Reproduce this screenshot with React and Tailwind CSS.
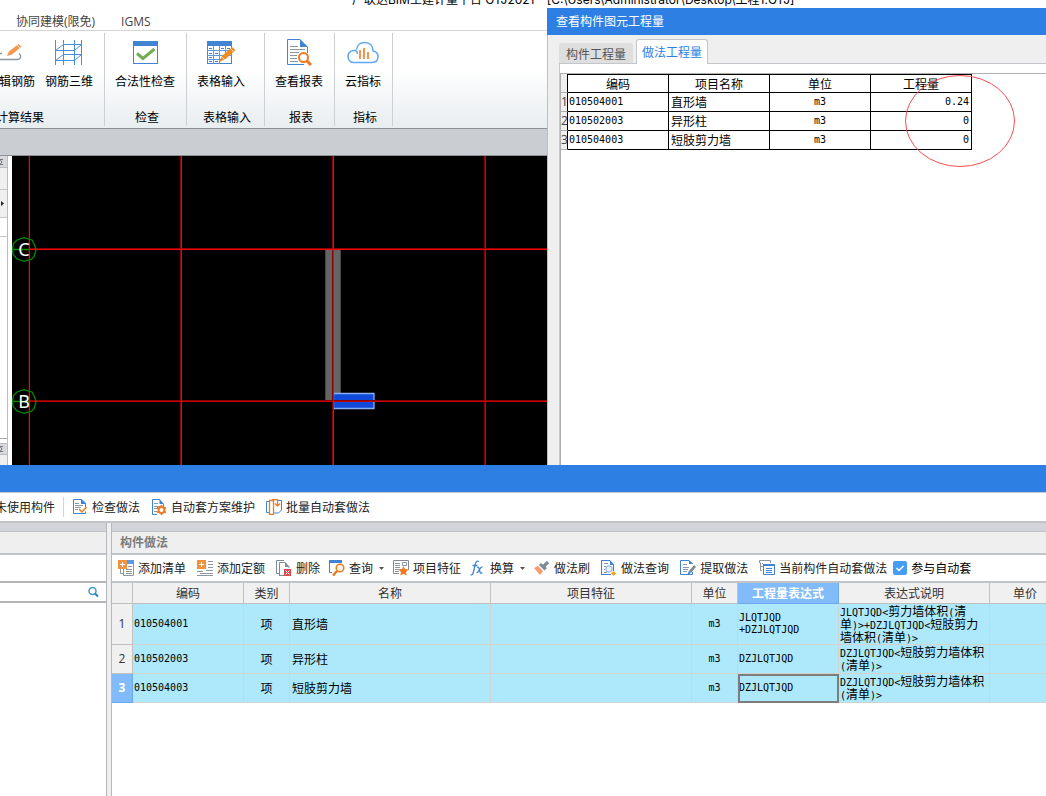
import { Fragment } from "react";

// Ribbon icons

function RebarEditIcon() {
  return (
    <svg width="28" height="28" viewBox="0 0 28 28" fill="none">
      <path d="M0 15.5h5M0 21.5h20.5a3.2 3.2 0 0 0 1.5-6" stroke="#8c979f" strokeWidth="1.3" />
      <path d="M10 18l2-4.500L21.5 6l3 2.5-9.5 8z" fill="#f5964d" />
      <path d="M20 7l3 3" stroke="#fff" strokeWidth="0.8" />
    </svg>
  );
}

function Rebar3dIcon() {
  return (
    <svg width="28" height="28" viewBox="0 0 28 28" fill="none" stroke="#4a8fdc">
      <path d="M.5 2v25M8.5 2v25M19.5 2v25M26.5 2v25" />
      <path d="M8 6.5h19M0 12.5h20M8 16.5h19M0 22.5h20" />
      <path d="M.5 12.5l8-6M19.5 12.5l7-6M.5 22.5l8-6M19.5 22.5l7-6" />
    </svg>
  );
}

function ValidateIcon() {
  return (
    <svg width="28" height="28" viewBox="0 0 28 28" fill="none">
      <rect x="2.5" y="3.5" width="24" height="22" fill="#fff" stroke="#4384d2" />
      <path d="M2 3h25v5H2z" fill="#4384d2" />
      <path d="M6 15.5l6 5L23.5 11" stroke="#74ad54" strokeWidth="3" />
    </svg>
  );
}

function TableInputIcon() {
  return (
    <svg width="28" height="28" viewBox="0 0 28 28" fill="none">
      <rect x=".5" y="3.5" width="24" height="22" fill="#fff" stroke="#4384d2" />
      <path d="M0 3h25v5H0z" fill="#4384d2" />
      <path d="M0 12.5h25M0 17.5h25M0 21.5h16M6.5 8v18M12.5 8v18M18.5 8v10" stroke="#5c9be2" />
      <path d="M2 10.5h3M2 15.5h3M2 19.5h3M2 23.5h3M8 15.5h3M8 23.5h3M14 10.5h3M20 10.5h3" stroke="#4384d2" />
      <path d="M12 24l3-6L25 9l3.5 3-10 9z" fill="#f08c1e" />
      <path d="M14.5 18.5l3 3M23.5 10.5l3 3" stroke="#fff" strokeWidth=".7" />
    </svg>
  );
}

function ReportIcon() {
  return (
    <svg width="28" height="28" viewBox="0 0 28 28" fill="none">
      <path d="M15 1.5H2.5v25H19M22.5 9v6" stroke="#4384d2" />
      <path d="M15 1v8h8z" fill="#4384d2" />
      <path d="M5 8.5h8M5 11.5h15M5 14.5h9M5 17.5h7M5 20.5h7M5 23.5h8" stroke="#8c979f" />
      <circle cx="18.5" cy="19.5" r="4.5" fill="#fff" stroke="#ee7b22" strokeWidth="2" />
      <path d="M22 23l4 4" stroke="#ee7b22" strokeWidth="3" />
    </svg>
  );
}

function CloudIcon() {
  return (
    <svg width="32" height="28" viewBox="0 0 32 28" fill="none">
      <path
        d="M10.5 16c0-2-1-4-4-3.5C3 13 1 15.5 1 18.5 1 22 3.5 24.5 7 24.5h18c4 0 6-2.5 6-6 0-3-1.5-5-5-5.5 0-5-3-8.5-8.5-8.5-4.5 0-7.5 3-8 7"
        stroke="#62a9f2"
        strokeWidth="1.6"
      />
      <path d="M12 12h2v9h-2zM16 10h2v11h-2zM20 14h2v7h-2z" fill="#f5964d" />
    </svg>
  );
}

// Toolbar icons, all on a 16px grid

function Icon({ children }) {
  return (
    <svg width="16" height="16" viewBox="0 0 16 16" fill="none" className="shrink-0">
      {children}
    </svg>
  );
}

function PageBase() {
  return (
    <>
      <path d="M6 15.5H1.5V.5H9M12.5 5v3" stroke="#3f84d4" />
      <path d="M8.5 0v5H13z" fill="#3f84d4" />
      <path d="M3 4.5h4M3 7.5h7M3 9.5h4M3 12.5h3" stroke="#8c979f" />
    </>
  );
}

const checkIcon = (
  <Icon>
    <path d="M13.5 8v-4L9.5.5h-8v14h12v-2" stroke="#3f84d4" />
    <path d="M9 0v5h5z" fill="#3f84d4" />
    <path d="M3 4.5h4M3 6.5h8M3 8.5h6M3 10.5h3" stroke="#8c979f" />
    <path d="M7 10l3 3 4.5-5" stroke="#ee7b22" strokeWidth="1.5" />
  </Icon>
);

const schemeIcon = (
  <Icon>
    <PageBase />
    <circle cx="10.5" cy="11" r="3" stroke="#ee7b22" strokeWidth="2" fill="#fff" />
    <path d="M10.5 6v2M10.5 14v2M6 8.5l2 1M13 12.5l2 1M6 13.5l2-1M13 9.5l2-1" stroke="#ee7b22" strokeWidth="1.8" />
  </Icon>
);

const batchIcon = (
  <Icon>
    <path d="M3 2.5H.5v11H3M11 1.5h4.5V11l-3 3H8" stroke="#3f84d4" />
    <path d="M3.5 1.5h4v14h-4zM6 .5h5.5V6M9 4.5L11.5 7 14 4.5" stroke="#ee7b22" strokeWidth="1.3" />
  </Icon>
);

const addListIcon = (
  <Icon>
    <path d="M9 0h7v4H9z" fill="#5b9ae2" />
    <path d="M2.5 9v4.5H5M5.5 9v6.5h10V4" stroke="#8c979f" />
    <path d="M10 6.5h4M8 9.5h6M8 11.5h6M8 13.5h6" stroke="#8c979f" />
    <path d="M0 0h9v9H0z" fill="#f0923f" />
    <path d="M4.5 2v5M2 4.5h5" stroke="#fff" />
  </Icon>
);

const addQuotaIcon = (
  <Icon>
    <path d="M11 1.5h5M11 4.5h5M11 7.5h5M9 10.5h7M0 11.5h6M3 13.5h13M0 15.5h16" stroke="#8c979f" />
    <path d="M0 0h9v9H0z" fill="#f0923f" />
    <path d="M4.5 2v5M2 4.5h5" stroke="#fff" />
  </Icon>
);

const deleteIcon = (
  <Icon>
    <path d="M3 13.5H.5V.5H8M3.5 15V2.5H9l4 4V8M8 15.5H3" stroke="#7f8b94" />
    <path d="M9 2v5h4z" fill="#7f8b94" />
    <path d="M8 9h7v7H8z" fill="#d9484b" />
    <path d="M9.5 10.5l4 4M13.5 10.5l-4 4" stroke="#fff" />
  </Icon>
);

const queryIcon = (
  <Icon>
    <path d="M.5 3v9.5H3" stroke="#3f84d4" />
    <path d="M0 0h13v3H0z" fill="#3f84d4" />
    <circle cx="11" cy="8" r="3.8" fill="#fff3e6" stroke="#ee7b22" strokeWidth="1.5" />
    <path d="M8 11l-4 4.5" stroke="#ee7b22" strokeWidth="2.5" />
  </Icon>
);

const featureIcon = (
  <Icon>
    <path d="M6 13.5H.5V.5h15V10" stroke="#7f8b94" />
    <path d="M2 3.5h5M2 5.5h5M2 7.5h5M2 9.5h6M2 11.5h4M9.5 2.5h4v3h-4z" stroke="#8c979f" />
    <path d="M10.5 6l1.5 3 3.5.5-2.5 2.5.8 3.5-3.3-1.7-3.2 1.7.7-3.5L5.5 9.5 9 9z" fill="#ee7b22" />
  </Icon>
);

const fxIcon = (
  <Icon>
    <path d="M9 1.5C7 .3 5.8 1.8 5.3 4L3.3 12.5C2.9 14.5 2 15.2.6 14.6M2.5 5.5h5" stroke="#3f84d4" strokeWidth="1.3" />
    <path d="M7 7.5c1.5-1 2 0 2.3 2l.7 2.5c.4 1.5 1.2 1.5 2.3.5M12.5 7c-1.5-.3-2 .7-3 2.5S7.8 13 6.5 12.7" stroke="#3f84d4" strokeWidth="1.3" />
  </Icon>
);

const brushIcon = (
  <Icon>
    <path d="M0 8l4-2 5 5-3 4z" fill="#f99a6c" />
    <path d="M5 5l2-2 6 5-2.5 2.5z" fill="#7f8b94" />
    <path d="M10 6l4-4" stroke="#7f8b94" strokeWidth="3.2" />
  </Icon>
);

const methodQueryIcon = (
  <Icon>
    <path d="M12.500 5v6M9 .5H.5v14H10" stroke="#3f84d4" strokeWidth="1.2" />
    <path d="M9 0v5h4.5z" fill="#3f84d4" />
    <path d="M3 3.5h4M3 6.5h2M3 9.5h1M3 12.5h3" stroke="#8c979f" />
    <circle cx="8" cy="9" r="3.2" fill="#e8f1fb" stroke="#8aa7d6" />
    <path d="M12.5 11l2.5 2.5-2.5 2.5-2.5-2.5z" fill="#f5a11c" />
  </Icon>
);

const extractIcon = (
  <Icon>
    <path d="M12.5 12v2.5H.5V.5H9L12.5 4" stroke="#3f84d4" />
    <path d="M9 0v4h4z" fill="#3f84d4" />
    <path d="M3 4.5h4M3 7.5h6M3 9.5h5M3 11.5h4" stroke="#8c979f" />
    <path d="M14 5l2 2-5 6-2-2z" fill="#7f8b94" />
    <path d="M9 11l2 2-4 2z" fill="#3f84d4" />
  </Icon>
);

const autoIcon = (
  <Icon>
    <path d="M3 10.5H1.5v-8M.5 3V.5h11V3M2 6.5h2M3 3.5h1" stroke="#8c979f" />
    <path d="M4.5 4.5h11v10h-11z" fill="#fff" stroke="#3f84d4" />
    <path d="M4 4h12v2H4z" fill="#3f84d4" />
    <path d="M7 8.5h6M7 10.5h6M7 12.5h6" stroke="#3f84d4" />
  </Icon>
);

const RIBBON = [
  {
    label: "计算结果",
    className: "-ml-[67px] w-[171px] justify-end pr-[11px]",
    items: [
      { text: "编辑钢筋", icon: <RebarEditIcon /> },
      { text: "钢筋三维", icon: <Rebar3dIcon /> },
    ],
  },
  { label: "检查", className: "w-[81px] pl-[10px]", items: [{ text: "合法性检查", icon: <ValidateIcon /> }] },
  { label: "表格输入", className: "w-[77px] pl-[10px]", items: [{ text: "表格输入", icon: <TableInputIcon /> }] },
  { label: "报表", className: "w-[69px] pl-[10px]", items: [{ text: "查看报表", icon: <ReportIcon /> }] },
  { label: "指标", className: "w-[57px] pl-[10px]", items: [{ text: "云指标", icon: <CloudIcon /> }] },
];

const QUANTITIES = [
  { code: "010504001", name: "直形墙", unit: "m3", amount: "0.24" },
  { code: "010502003", name: "异形柱", unit: "m3", amount: "0" },
  { code: "010504003", name: "短肢剪力墙", unit: "m3", amount: "0" },
];

const METHODS = [
  {
    code: "010504001",
    name: "直形墙",
    expr: "JLQTJQD\n+DZJLQTJQD",
    note: "JLQTJQD<剪力墙体积(清\n单)>+DZJLQTJQD<短肢剪力\n墙体积(清单)>",
  },
  { code: "010502003", name: "异形柱", expr: "DZJLQTJQD", note: "DZJLQTJQD<短肢剪力墙体积\n(清单)>" },
  { code: "010504003", name: "短肢剪力墙", expr: "DZJLQTJQD", note: "DZJLQTJQD<短肢剪力墙体积\n(清单)>" },
];

const TOOLS = [
  { text: "添加清单", icon: addListIcon },
  { text: "添加定额", icon: addQuotaIcon },
  { text: "删除", icon: deleteIcon },
  { text: "查询", icon: queryIcon, menu: true },
  { text: "项目特征", icon: featureIcon },
  { text: "换算", icon: fxIcon, menu: true },
  { text: "做法刷", icon: brushIcon },
  { text: "做法查询", icon: methodQueryIcon },
  { text: "提取做法", icon: extractIcon },
  { text: "当前构件自动套做法", icon: autoIcon },
];

// 10px mono is 6px wide, half of a 12px Chinese character
const mono = "font-['DejaVu_Sans_Mono',monospace] text-[10px]";

function Mixed({ children }) {
  return children.split(/([\x20-\x7e]+)/).map((part, i) =>
    /^[\x20-\x7e]+$/.test(part) ? (
      <span key={i} className={`${mono} leading-none`}>
        {part}
      </span>
    ) : (
      <Fragment key={i}>{part}</Fragment>
    )
  );
}

function ToolButton({ text, icon, menu }) {
  return (
    <button
      className={`flex h-5 shrink-0 items-center gap-1 rounded-sm whitespace-nowrap ${
        menu ? "px-[3px]" : "px-[5px]"
      }`}
    >
      {icon}
      <span>{text}</span>
      {menu && (
        <svg width="5" height="3" viewBox="0 0 5 3" className="ml-[2px]">
          <path d="M0 0h5L2.5 3z" fill="#555" />
        </svg>
      )}
    </button>
  );
}

function RibbonGroup({ group }) {
  return (
    <div className="flex shrink-0 border-r border-[#cdd0d3]">
      <div className={`relative flex gap-[10px] pt-[5px] ${group.className}`}>
        {group.items.map((item) => (
          <button key={item.text} className="flex flex-col items-center gap-[7px] self-start whitespace-nowrap">
            {item.icon}
            <span className="leading-4">{item.text}</span>
          </button>
        ))}
        <div className="absolute inset-x-0 bottom-px pl-[3px] text-center leading-4">{group.label}</div>
      </div>
    </div>
  );
}

function CollapseMark() {
  return (
    <svg width="3" height="6" viewBox="0 0 3 6" fill="none" stroke="#777">
      <path d="M3 .5H0L2 3 0 5.5h3" />
    </svg>
  );
}

function SidePanel() {
  return (
    <div className="flex w-2 shrink-0 flex-col border-r border-[#b9bcc4] bg-white">
      <div className="flex h-3 items-center border-b border-[#b9bcc4] bg-[#d6d8de]">
        <CollapseMark />
      </div>
      <div className="h-[22px] border-b border-[#c3c6cc] bg-[#efefef]" />
      <div className="flex h-7 items-center border-b border-[#c3c6cc] bg-[#efefef]">
        <svg width="4" height="5" viewBox="0 0 4 5">
          <path d="M1 0v5l3-2.5z" fill="#222" />
        </svg>
      </div>
      <div className="h-[19px] border-b border-[#c3c6cc]" />
      <div className="grow border-b border-[#a9a9a9]" />
      <div className="mt-1 flex h-3 items-center border-y border-[#b9bcc4] bg-[#d6d8de]">
        <CollapseMark />
      </div>
      <div className="h-[10px] bg-[#efefef]" />
    </div>
  );
}

function Drawing() {
  return (
    <svg
      className="h-[309px] min-w-0 flex-1 bg-black"
      viewBox="12 156 535 309"
      preserveAspectRatio="xMinYMin slice"
      fill="none"
    >
      <path d="M325 249h16v152h-16z" fill="#464646" />
      <path d="M326 249h14v152h-14z" fill="#646464" />
      <path d="M333.5 393.5h40.5v15h-40.5z" fill="#1048d8" stroke="#86aef2" strokeWidth="1.3" />
      {/* axis grid */}
      <path d="M180 156h1v309h-1zM332 156h1v309h-1zM484 156h1v309h-1zM29 248h518v1H29zM29 400h518v1H29z" fill="#8a0000" />
      <path d="M485 156h1v309h-1zM29 401h518v1H29z" fill="#c80000" />
      <path d="M28 156h1v309h-1z" fill="#400000" />
      <path d="M29 156h1v309h-1zM181 156h1v309h-1zM333 156h1v309h-1zM29 249h518v1H29z" fill="#ff0000" />
      {["C", "B"].map((axis, i) => (
        <g key={axis} transform={`translate(24 ${249.5 + i * 152})`}>
          <path
            d="M0-11.8L8-9.5 11-3.5 12 0 10 7.5 7 10 0 11.8-7 9.5-10.5 5.5-12 0-10.5-6-7-9.5zM-12 0H5"
            stroke="#008a00"
            strokeWidth="1.3"
          />
          <text y="6" textAnchor="middle" className="fill-white font-['Noto_Sans',sans-serif] text-[18px]">
            {axis}
          </text>
        </g>
      ))}
    </svg>
  );
}

function QuantityDialog() {
  return (
    <section className="flex min-w-0 flex-col bg-[#efefef]">
      <h2 className="h-[27px] bg-[#2d7fe3] pl-[9px] leading-[26px] text-white">查看构件图元工程量</h2>
      <div className="flex grow flex-col border-l border-[#b9c0cf] pl-[11px]">
        <div className="flex h-[29px] items-end gap-[3px]" role="tablist">
          <button role="tab" className="h-[21px] rounded-t-[3px] bg-[#dedede] px-[7px] leading-5 text-[#555]">
            构件工程量
          </button>
          <button
            role="tab"
            aria-selected="true"
            className="z-10 h-[25px] rounded-t-[3px] border border-b-0 border-[#c3c7cc] bg-white px-[5px] text-[#2d7fe3]"
          >
            做法工程量
          </button>
        </div>
        <div className="-mt-px grow border-t border-l border-[#c3c7cc] bg-white pt-[9px]">
          <div className="relative h-full border-t border-l border-[#b0b0b0]">
            <table className="w-[411px] table-fixed border-separate border-spacing-0 text-black">
              <colgroup>
                <col className="w-[7px]" />
                <col className="w-[101px]" />
                <col className="w-[101px]" />
                <col className="w-[101px]" />
                <col className="w-[101px]" />
              </colgroup>
              <thead>
                <tr className="h-[19px] leading-4">
                  <td className="border-r border-b border-r-black border-b-[#b0b0b0] bg-[#efefef] p-0" />
                  {["编码", "项目名称", "单位", "工程量"].map((h) => (
                    <th key={h} className="border-y border-r border-black p-0 font-normal">
                      {h}
                    </th>
                  ))}
                </tr>
              </thead>
              <tbody>
                {QUANTITIES.map((row, i) => (
                  <tr key={row.code} className="h-[19px] leading-4">
                    <th className="border-r border-b border-r-black border-b-[#b0b0b0] bg-[#efefef] p-0 font-['Open_Sans',sans-serif] font-normal text-[#444]">
                      {i + 1}
                    </th>
                    <td className={`border-r border-b border-black p-0 pl-px ${mono}`}>{row.code}</td>
                    <td className="border-r border-b border-black p-0 pl-[2px]">{row.name}</td>
                    <td className={`border-r border-b border-black p-0 text-center ${mono}`}>{row.unit}</td>
                    <td className={`border-r border-b border-black p-0 pr-[2px] text-right ${mono}`}>{row.amount}</td>
                  </tr>
                ))}
              </tbody>
            </table>
            {/* review mark around the totals */}
            <svg className="absolute top-px left-[344px]" width="110" height="92" viewBox="0 0 110 92" fill="none">
              <ellipse cx="55" cy="46" rx="54.5" ry="45.5" stroke="#f94c4c" />
            </svg>
          </div>
        </div>
      </div>
    </section>
  );
}

function MethodTable() {
  const heads = ["编码", "类别", "名称", "项目特征", "单位", "工程量表达式", "表达式说明", "单价"];
  const cell = "border-r border-b border-[#d3d3d3] bg-[#aee9fb] p-0";

  return (
    <table className="w-[949px] min-w-full table-fixed border-separate border-spacing-0 text-black">
      <colgroup>
        <col className="w-[21px]" />
        <col className="w-[111px]" />
        <col className="w-[46px]" />
        <col className="w-[201px]" />
        <col className="w-[201px]" />
        <col className="w-[46px]" />
        <col className="w-[101px]" />
        <col className="w-[151px]" />
        <col className="w-[71px]" />
      </colgroup>
      <thead>
        <tr className="h-[21px] leading-4 text-[#333]">
          <td className="border-r border-b border-[#c0c0c0] bg-[#f0f0f0] p-0" />
          {heads.map((h) => (
            <th
              key={h}
              className={`border-r border-b p-0 ${
                h === "工程量表达式"
                  ? "border-[#6aa8ee] bg-[#82bbfa] font-bold text-white"
                  : "border-[#c0c0c0] bg-[#f0f0f0] font-normal"
              }`}
            >
              {h}
            </th>
          ))}
        </tr>
      </thead>
      <tbody>
        {METHODS.map((row, i) => {
          const active = i === 2;
          return (
            <tr key={row.code} className={`leading-3 ${i === 0 ? "h-[41px]" : "h-[29px]"}`}>
              <th
                className={`border-r border-b p-0 font-['Open_Sans',sans-serif] ${
                  active
                    ? "border-[#6aa8ee] bg-[#82bbfa] font-bold text-white"
                    : "border-[#c0c0c0] bg-[#f0f0f0] font-normal text-[#333]"
                }`}
              >
                {i + 1}
              </th>
              <td className={`${cell} pl-px ${mono}`}>{row.code}</td>
              <td className={`${cell} text-center`}>项</td>
              <td className={`${cell} pl-[2px]`}>{row.name}</td>
              <td className={cell} />
              <td className={`${cell} text-center ${mono}`}>m3</td>
              <td
                className={`${cell} pl-px whitespace-pre ${mono} ${
                  active ? "outline-2 -outline-offset-2 outline-[#7d7d7d]" : ""
                }`}
              >
                {row.expr}
              </td>
              <td className={`${cell} pl-px whitespace-pre`}>
                <Mixed>{row.note}</Mixed>
              </td>
              <td className={cell} />
            </tr>
          );
        })}
      </tbody>
    </table>
  );
}

export default function App() {
  return (
    <div className="flex min-h-screen w-full flex-col overflow-hidden bg-white font-['Noto_Sans_CJK_SC',sans-serif] text-[12px] leading-4 text-[#222]">
      {/* window title */}
      <div className="flex h-2 items-end overflow-hidden pl-[352px] font-['Inter','Noto_Sans_CJK_SC',sans-serif] whitespace-nowrap text-black">
        <h1 className="leading-4">广联达BIM土建计量平台 GTJ2021 - [C:\Users\Administrator\Desktop\工程1.GTJ]</h1>
      </div>

      <div className="grid grid-cols-[547fr_499fr]">
        <main className="flex min-w-0 flex-col overflow-hidden">
          <nav className="flex h-[23px] items-center gap-[26px] border-b border-[#d5d5d5] pt-[5px] pl-4 font-['Open_Sans','Noto_Sans_CJK_SC',sans-serif] text-[#444]">
            <a href="#collab">协同建模(限免)</a>
            <a href="#igms">IGMS</a>
          </nav>
          <div className="flex h-[98px] border-b border-[#8e9298] bg-linear-to-b from-white from-40% to-[#e8edef] py-[2px] text-black">
            {RIBBON.map((group) => (
              <RibbonGroup key={group.label} group={group} />
            ))}
          </div>
          <div className="h-[27px] border-b border-[#8e9298] bg-[#cacdd2]" />
          <div className="flex">
            <SidePanel />
            <div className="w-1 shrink-0 bg-white" />
            <Drawing />
          </div>
        </main>
        <QuantityDialog />
      </div>

      <div className="h-7 border-b border-[#c8cacd] bg-[#2d7fe3]" />
      <div className="flex h-[30px] items-center gap-px border-b-2 border-[#c0c3c8]">
        <button className="-ml-[5px] shrink-0 whitespace-nowrap">未使用构件</button>
        <div className="mr-[2px] ml-[7px] h-5 w-px bg-[#d5d5d5]" />
        <ToolButton text="检查做法" icon={checkIcon} />
        <ToolButton text="自动套方案维护" icon={schemeIcon} />
        <ToolButton text="批量自动套做法" icon={batchIcon} />
      </div>

      <div className="flex grow">
        <aside className="flex w-[107px] shrink-0 flex-col border-r border-[#b5b8bd]">
          <div className="h-[9px] border-b border-[#c0c3c8] bg-[#d2d4d9]" />
          <div className="h-[23px] border-b-2 border-[#c0c3c8] bg-[#efefef]" />
          <div className="h-[28px] border-b-2 border-[#b5b5b5]" />
          <label className="flex h-[20px] items-center border-b-2 border-[#b5b5b5] pr-[7px]">
            <input type="text" aria-label="搜索构件" className="h-full min-w-0 flex-1 px-1 outline-none" />
            <svg width="12" height="12" viewBox="0 0 12 12" fill="none">
              <circle cx="5.5" cy="5" r="3.5" stroke="#3f9ac9" strokeWidth="1.5" />
              <path d="M8 7.5l3 3" stroke="#2f7fae" strokeWidth="2" />
            </svg>
          </label>
        </aside>
        <div className="w-1 shrink-0 bg-[#efefef]" />
        <section className="flex min-w-0 flex-1 flex-col overflow-hidden border-l border-[#b5b8bd]">
          <div className="h-[9px] shrink-0 border-b border-[#c0c3c8] bg-[#d2d4d9]" />
          <h2 className="h-[23px] border-b-2 border-[#c0c3c8] bg-[#efefef] pl-2 leading-5 font-semibold text-[#7c7c7c]">
            构件做法
          </h2>
          <div className="flex h-[28px] items-center gap-px border-b-2 border-[#c0c3c8] pl-px">
            {TOOLS.map((tool) => (
              <ToolButton key={tool.text} {...tool} />
            ))}
            <label className="flex shrink-0 items-center gap-1 whitespace-nowrap text-black">
              <span className="relative flex">
                <input type="checkbox" defaultChecked className="size-[14px] appearance-none rounded-xs bg-[#479cf3]" />
                <svg className="pointer-events-none absolute inset-0" width="14" height="14" viewBox="0 0 14 14" fill="none">
                  <path d="M3.5 7l2.5 2.5 4.5-4.5" stroke="#fff" strokeWidth="1.5" />
                </svg>
              </span>
              参与自动套
            </label>
          </div>
          <MethodTable />
        </section>
      </div>
    </div>
  );
}
